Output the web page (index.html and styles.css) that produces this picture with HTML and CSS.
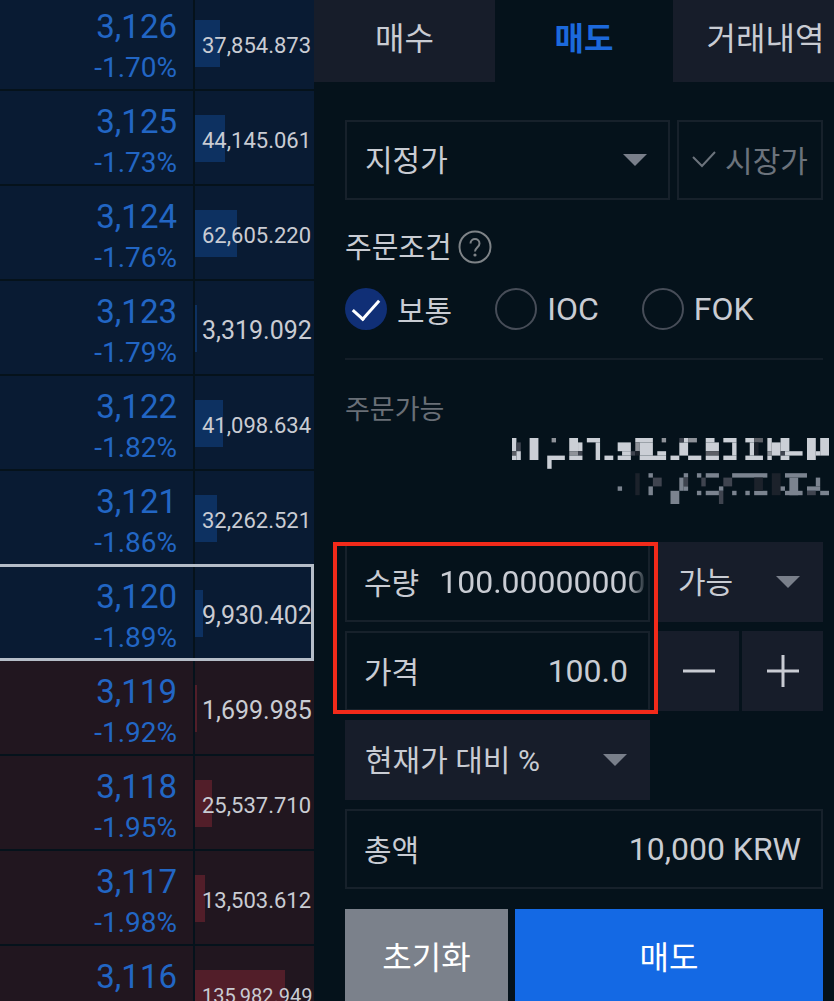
FILE: index.html
```html
<!DOCTYPE html>
<html lang="ko">
<head>
  <meta charset="UTF-8">
  <meta name="viewport" content="width=device-width, initial-scale=1">
  <title>매도</title>
  <link rel="stylesheet" href="styles.css">
</head>
<body>

  <main class="trade">
    <table class="book">
      <tbody id="bookRows"></tbody>
    </table>

    <section class="order">
      <nav class="tabs">
        <button type="button" class="tab">매수</button>
        <button type="button" class="tab active">매도</button>
        <button type="button" class="tab tab-last">거래내역</button>
      </nav>

      <form class="order-form" id="orderForm">
        <div class="type-row">
          <div class="select-box outlined">
            <select aria-label="주문유형">
              <option>지정가</option>
            </select>
            <svg class="arrow" viewBox="0 0 24 12"><path d="M0 0h24L12 12z"/></svg>
          </div>
          <button type="button" class="market">
            <svg class="check" viewBox="0 0 24 18"><path d="M1 7l9 9L23 2"/></svg>
            시장가
          </button>
        </div>

        <fieldset class="condition">
          <legend>
            주문조건
            <svg class="help" viewBox="0 0 34 34">
              <circle cx="17" cy="17" r="15.5"/>
              <path d="M12.500 13.500c0-6 9-6 9 0 0 4-4.500 4-4.500 8"/>
              <circle class="dot" cx="17" cy="25" r="1.600"/>
            </svg>
          </legend>
          <div class="radios">
            <label><input type="radio" name="cond" checked>보통</label>
            <label class="latin"><input type="radio" name="cond">IOC</label>
            <label class="latin"><input type="radio" name="cond">FOK</label>
          </div>
        </fieldset>

        <div class="available">
          <span>주문가능</span>
          <svg class="masked" id="masked" viewBox="0 0 72 15" preserveAspectRatio="none"></svg>
        </div>

        <div class="entry">
          <div class="field qty-field">
            <label for="qty">수량</label>
            <input type="text" id="qty" value="100.00000000">
          </div>
          <div class="select-box filled">
            <select aria-label="가능">
              <option>가능</option>
            </select>
            <svg class="arrow" viewBox="0 0 24 12"><path d="M0 0h24L12 12z"/></svg>
          </div>

          <div class="field">
            <label for="price">가격</label>
            <input type="text" id="price" value="100.0">
          </div>
          <div class="steps">
            <button type="button" id="minus" aria-label="-"><svg viewBox="0 0 32 32"><path d="M0 16h32"/></svg></button>
            <button type="button" id="plus" aria-label="+"><svg viewBox="0 0 32 32"><path d="M0 16h32M16 0v32"/></svg></button>
          </div>

          <div class="select-box filled">
            <select aria-label="현재가 대비 %">
              <option>현재가 대비 %</option>
            </select>
            <svg class="arrow" viewBox="0 0 24 12"><path d="M0 0h24L12 12z"/></svg>
          </div>
          <div class="highlight"></div>
        </div>

        <div class="field total">
          <label for="total">총액</label>
          <input type="text" id="total" value="10,000 KRW">
        </div>

        <div class="actions">
          <button type="reset" class="reset">초기화</button>
          <button type="submit" class="sell">매도</button>
        </div>
      </form>
    </section>
  </main>

  <script src="script.js"></script>
</body>
</html>
```
FILE: styles.css
```css
* {
  box-sizing: border-box;
}

body {
  margin: 0;
  background: #05121b;
  color: #c9ccd3;
  font-family: Roboto, "Noto Sans CJK KR", sans-serif;
  font-size: 30px;
}

button, input, select {
  font: inherit;
  color: inherit;
  border: none;
  border-radius: 0;
  margin: 0;
  padding: 0;
  background: none;
}

button {
  cursor: pointer;
}

.trade {
  display: grid;
  grid-template-columns: 314px minmax(0, 1fr);
  height: 100vh;
  overflow: hidden;
}

/* order book, scrolled a little past its first row */
.book {
  width: 100%;
  margin-top: -4px;
  table-layout: fixed;
  border-collapse: separate;
  border-spacing: 0;
  align-self: start;
}

.book tr {
  background: #091b33;
}

.book tr.bid {
  background: #21161f;
}

.book td {
  height: 95px;
  padding: 0;
  border-bottom: 2px solid #05121b;
  vertical-align: top;
}

.book .price {
  width: 195px;
  padding: 10px 16px 0 0;
  border-right: 2px solid #05121b;
  color: #2266c4;
  text-align: right;
}

.price b {
  display: block;
  font-size: 33px;
  font-weight: 400;
  line-height: 41px;
}

.price span {
  display: block;
  font-size: 28px;
  line-height: 41px;
}

.book .amount {
  position: relative;
  padding-top: 24px;
  font-size: 22px;
  white-space: nowrap;
}

/* the text shrinks as the number gets longer */
.book .short {
  font-size: 25px;
}

.book .long {
  font-size: 20px;
}

.amount div {
  position: relative;
  height: 47px;
  padding-left: 7px;
  line-height: 52px;
}

.amount i {
  position: absolute;
  left: 0;
  top: 0;
  height: 100%;
  background: #0d3161;
}

.bid .amount i {
  background: #521e29;
}

.amount span {
  position: relative;
}

/* frame over both cells of the current price */
.current .amount::after {
  content: "";
  position: absolute;
  inset: -2px 0 -2px -195px;
  border: 3px solid #b5bdc8;
  border-left: none;
}

/* tabs */
.tabs {
  display: grid;
  grid-template-columns: 181px 178px minmax(0, 1fr);
  height: 82px;
}

.tab {
  background: #171d2a;
  font-size: 32px;
  padding-bottom: 10px;
  white-space: nowrap;
}

.tab.active {
  background: #05121b;
  color: #1c69dc;
  font-weight: 700;
}

.tab-last {
  padding-left: 24px;
}

/* order form */
.order-form {
  padding: 38px 11px 0 31px;
}

.type-row {
  display: grid;
  grid-template-columns: minmax(0, 1fr) 146px;
  gap: 7px;
}

.select-box {
  display: flex;
  position: relative;
  height: 80px;
}

.select-box select {
  appearance: none;
  width: 100%;
  padding: 0 60px 0 20px;
}

.outlined select, .market, .field {
  border: 2px solid #17212b;
}

.outlined select {
  padding-left: 18px;
}

.filled {
  background: #171d2a;
}

.arrow {
  position: absolute;
  right: 23px;
  top: 34px;
  width: 24px;
  height: 12px;
  fill: #797f8a;
  pointer-events: none;
}

.market {
  display: flex;
  align-items: center;
  justify-content: center;
  gap: 9px;
  color: #6c737c;
  padding-bottom: 2px;
}

.check {
  width: 24px;
  height: 18px;
  fill: none;
  stroke: #6c737c;
  stroke-width: 2;
}

.condition {
  margin: 22px 0 0;
  padding: 0 0 28px;
  border: none;
  border-bottom: 2px solid #141e28;
}

.condition legend {
  display: flex;
  align-items: center;
  gap: 6px;
  height: 46px;
  padding: 0;
  font-size: 29px;
}

.help {
  width: 34px;
  height: 34px;
  margin-top: 4px;
  fill: none;
  stroke: #7e8387;
  stroke-width: 2;
}

.help .dot {
  fill: #7e8387;
  stroke: none;
}

.radios {
  display: flex;
  gap: 43px;
  margin-top: 20px;
}

.radios label {
  display: flex;
  align-items: center;
  gap: 10px;
  height: 42px;
}

.radios .latin {
  font-size: 32px;
}

.radios input {
  appearance: none;
  width: 42px;
  height: 42px;
  border: 2px solid #474d58;
  border-radius: 50%;
}

.radios input:checked {
  display: grid;
  place-items: center;
  border: none;
  background: #102f76;
}

.radios input:checked::before {
  content: "";
  width: 23px;
  height: 12px;
  border-left: 3px solid #fff;
  border-bottom: 3px solid #fff;
  transform: translateY(-3px) rotate(-48deg);
}

.available {
  display: flex;
  flex-direction: column;
  height: 182px;
  padding-top: 28px;
  color: #696f77;
  font-size: 27px;
  line-height: 44px;
}

.masked {
  align-self: flex-end;
  width: 317px;
  height: 66px;
  margin: 6px -6px 0 0;
}

.entry {
  display: grid;
  position: relative;
  grid-template-columns: minmax(0, 1fr) 165px;
  gap: 9px 8px;
}

.field {
  display: flex;
  align-items: center;
  gap: 20px;
  height: 80px;
  padding: 0 20px 0 17px;
}

.field label {
  flex: none;
  padding-bottom: 2px;
}

.field input {
  flex: 1;
  min-width: 0;
  height: 70px;
  font-size: 32px;
  text-align: right;
}

/* long quantity fades out at the edge */
.qty-field {
  padding-right: 0;
}

.qty-field input {
  text-align: left;
  -webkit-mask-image: linear-gradient(to left, transparent, #000 20px);
  mask-image: linear-gradient(to left, transparent, #000 20px);
}

.steps {
  display: grid;
  grid-template-columns: 1fr 1fr;
  gap: 3px;
}

.steps button {
  display: grid;
  place-items: center;
  background: #171d2a;
}

.steps svg {
  width: 32px;
  height: 32px;
  stroke: #c9ccd3;
  stroke-width: 3;
}

/* red frame round quantity and price */
.highlight {
  position: absolute;
  left: -12px;
  right: 165px;
  top: 0;
  height: 172px;
  border: 4px solid #f32a1a;
  pointer-events: none;
}

.total {
  margin-top: 9px;
}

.actions {
  display: grid;
  grid-template-columns: 163px minmax(0, 1fr);
  gap: 7px;
  margin-top: 20px;
}

.actions button {
  height: 96px;
  padding-bottom: 4px;
  color: #fff;
  font-size: 32px;
}

.reset {
  background: #7b818b;
}

.sell {
  background: #1469e4;
}
```
FILE: script.js
```javascript
// price, change, amount, bar width
const rows = [
  ["3,126", "-1.70%", "37,854.873", 25],
  ["3,125", "-1.73%", "44,145.061", 30],
  ["3,124", "-1.76%", "62,605.220", 42],
  ["3,123", "-1.79%", "3,319.092", 2],
  ["3,122", "-1.82%", "41,098.634", 28],
  ["3,121", "-1.86%", "32,262.521", 22],
  ["3,120", "-1.89%", "9,930.402", 8],
  ["3,119", "-1.92%", "1,699.985", 2],
  ["3,118", "-1.95%", "25,537.710", 17],
  ["3,117", "-1.98%", "13,503.612", 10],
  ["3,116", "", "135,982.949", 90]
];

function amountClass(text) {
  if (text.length < 10) return "amount short";
  return text.length > 10 ? "amount long" : "amount";
}

document.getElementById("bookRows").innerHTML = rows.map(function (r, i) {
  const cls = i > 6 ? "bid" : i === 6 ? "current" : "";
  return `<tr class="${cls}">
    <td class="price"><b>${r[0]}</b><span>${r[1]}</span></td>
    <td class="${amountClass(r[2])}"><div><i style="width:${r[3]}px"></i><span>${r[2]}</span></div></td>
  </tr>`;
}).join("");

// pixelated balance: x, y, width, height, colour key
const colors = { W: "#cbcfd6", L: "#8e9299", G: "#5c5f66", M: "#7b838f", D: "#3f444f", E: "#1c222b" };
const blocks = [
  [0,0,1,3,"W"], [0,3,1,1,"G"], [0,4,1,1,"W"], [1,1,1,2,"D"], [1,3,1,2,"W"],
  [4,0,2,5,"W"], [9,0,1,1,"L"], [8,4,4,1,"W"], [8,5,1,2,"W"],
  [13,0,2,3,"W"], [15,1,1,2,"W"], [13,3,2,1,"L"], [15,3,1,1,"D"], [13,4,3,1,"W"],
  [17,0,3,1,"W"], [19,1,1,4,"W"], [21,4,2,1,"W"],
  [24,1,3,2,"W"], [25,3,2,1,"W"], [24,4,3,1,"W"], [27,3,1,1,"D"],
  [28,0,4,1,"W"], [28,1,1,2,"L"], [29,1,3,3,"W"], [28,3,1,1,"E"], [29,4,6,1,"W"], [33,3,2,1,"W"], [34,0,1,1,"L"],
  [36,4,2,1,"W"], [38,1,2,3,"W"], [39,0,1,1,"W"], [38,0,1,1,"D"], [40,0,2,1,"L"], [40,4,3,1,"W"],
  [44,0,2,1,"W"], [44,1,3,2,"W"], [44,3,3,1,"G"], [44,4,3,1,"W"],
  [48,0,3,1,"W"], [50,1,1,3,"W"], [48,4,3,1,"W"],
  [53,0,2,1,"W"], [55,0,2,1,"G"], [54,1,1,3,"W"], [55,1,1,3,"E"], [53,4,4,1,"W"],
  [58,0,1,3,"W"], [58,3,1,1,"L"], [58,4,1,1,"W"], [59,1,2,3,"W"], [61,0,2,3,"W"], [61,3,1,1,"D"], [62,3,4,1,"W"], [61,4,2,1,"W"],
  [67,0,2,5,"W"], [69,3,1,1,"W"], [70,0,2,4,"W"],
  [24,11,1,1,"M"], [28,8,1,5,"E"], [31,8,1,1,"M"], [31,11,1,2,"M"], [32,9,2,2,"D"],
  [36,12,2,3,"M"], [38,9,1,3,"M"], [39,8,1,1,"M"], [39,9,1,2,"D"], [39,11,1,1,"M"],
  [42,8,1,1,"M"], [42,12,1,1,"M"], [43,9,1,2,"D"], [44,8,3,1,"M"], [44,12,3,1,"M"],
  [47,11,1,1,"M"], [47,12,1,3,"D"], [48,9,2,2,"D"],
  [50,8,8,1,"M"], [50,12,1,1,"M"], [53,12,1,1,"M"], [55,12,3,1,"M"], [55,9,2,3,"E"],
  [59,8,2,5,"E"], [62,8,5,1,"M"], [63,9,2,4,"M"], [61,11,1,1,"M"], [62,12,4,1,"M"],
  [67,11,3,1,"M"], [69,9,1,2,"M"], [67,12,2,1,"D"], [70,12,2,1,"M"]
];

document.getElementById("masked").innerHTML = blocks.map(function (b) {
  return `<rect x="${b[0]}" y="${b[1]}" width="${b[2]}" height="${b[3]}" fill="${colors[b[4]]}"/>`;
}).join("");
```
